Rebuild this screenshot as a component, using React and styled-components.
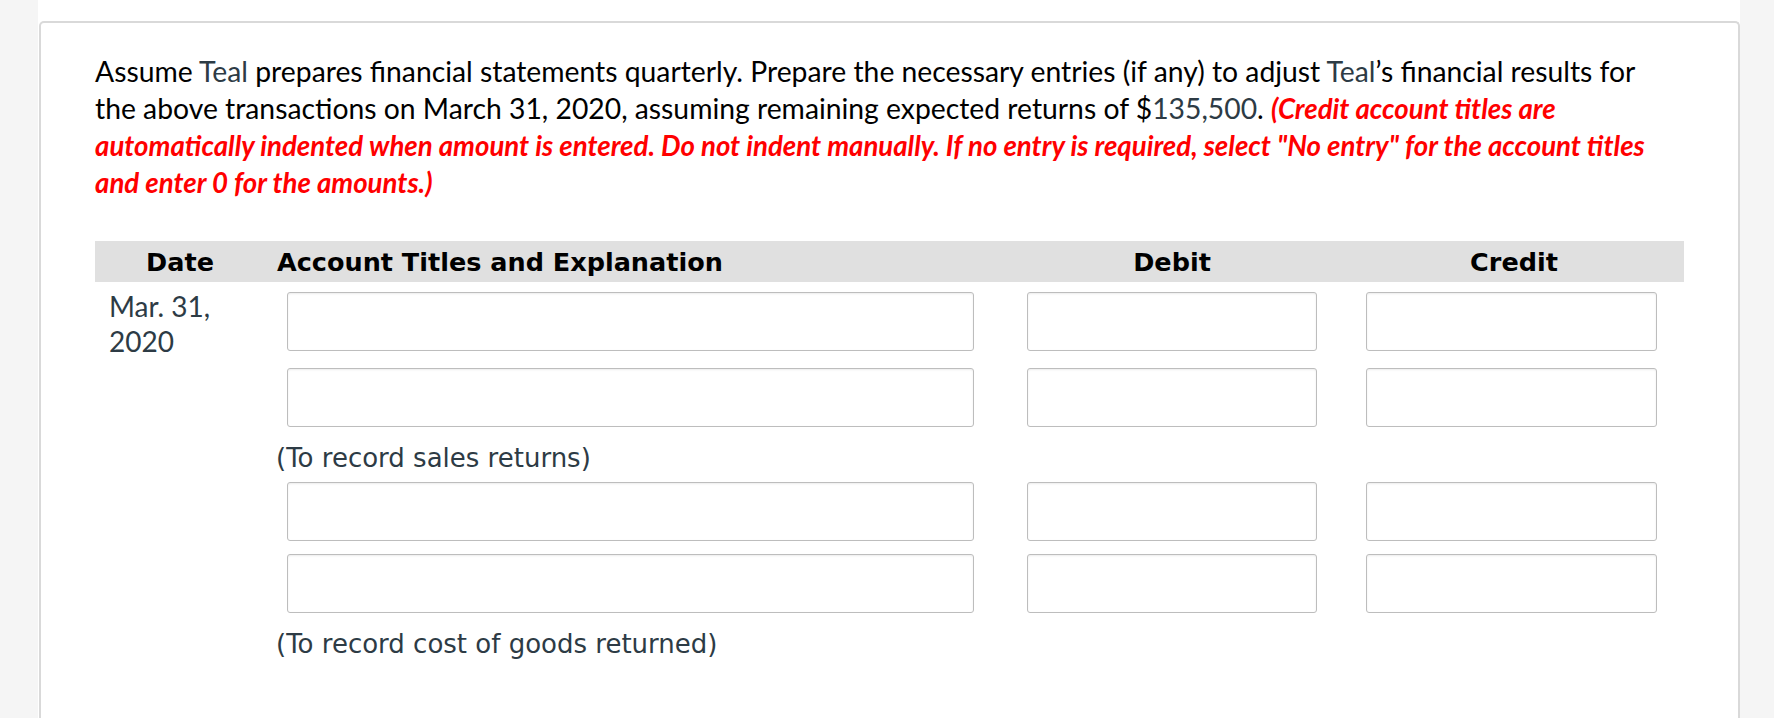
import React from 'react'
import styled, { createGlobalStyle } from 'styled-components'

const GlobalStyle = createGlobalStyle`
  html, body {
    margin: 0;
    padding: 0;
    background: #f5f5f5;
  }
  * {
    box-sizing: border-box;
  }
`;

const Page = styled.div`
  margin-left: 38px;
  width: 1702px;
  min-height: 100vh;
  padding-top: 21px;
  background: #fff;
`;

const Card = styled.div`
  margin-left: 1px;
  border: 2px solid #d9d9d9;
  border-bottom: none;
  border-radius: 5px 5px 0 0;
  padding: 30px 54px 60px 54px;
  min-height: 720px;
`;

const Question = styled.p`
  margin: 0;
  font-family: Lato, "Liberation Sans", sans-serif;
  font-size: 28.3px;
  line-height: 37px;
  color: #000;
`;

const Accent = styled.span`
  color: #2d3b45;
`;

const Warning = styled.span`
  color: #ff0000;
  font-size: 27.6px;
  font-weight: 700;
  font-style: italic;
`;

const COLUMNS = '170px 735px 344px 1fr';

const Journal = styled.div`
  margin-top: 40px;
  display: flex;
  flex-direction: column;
`;

const HeadRow = styled.div`
  display: grid;
  grid-template-columns: ${COLUMNS};
  align-items: center;
  height: 41px;
  background: #e0e0e0;
`;

const HeadCell = styled.div`
  font-family: "DejaVu Sans", Verdana, sans-serif;
  font-weight: 700;
  font-size: 25.5px;
  color: #000;
  text-align: ${(props) => (props.$left ? 'left' : 'center')};
  padding-left: ${(props) => (props.$left ? '12px' : '0')};
`;

const EntryRow = styled.div`
  display: grid;
  grid-template-columns: ${COLUMNS};
  margin-top: ${(props) => props.$top}px;
`;

const DateCell = styled.div`
  height: 59px;
  margin-top: -3px;
  padding-left: 14px;
  font-family: Lato, "Liberation Sans", sans-serif;
  font-size: 28px;
  line-height: 35px;
  color: #2d3b45;
  overflow: visible;
`;

const Field = styled.input`
  display: block;
  height: 59px;
  width: ${(props) => props.$width}px;
  margin-left: ${(props) => props.$left}px;
  border: 1px solid #bdbdbd;
  border-radius: 3px;
  box-shadow: inset 0 1px 2px rgba(0, 0, 0, 0.08);
  background: #fff;
  font-family: "DejaVu Sans", Verdana, sans-serif;
  font-size: 22px;
  padding: 0 10px;
  outline: none;
`;

const Note = styled.div`
  grid-column: 2 / span 3;
  padding-left: 11px;
  font-family: "DejaVu Sans", Verdana, sans-serif;
  font-size: 26px;
  line-height: 30px;
  color: #2d3b45;
`;

const LineItem = ({ top, date }) => (
  <EntryRow $top={top}>
    <DateCell>{date}</DateCell>
    <Field $width={687} $left={22} />
    <Field $width={290} $left={27} />
    <Field $width={291} $left={22} />
  </EntryRow>
);

const entries = [
  {
    date: (
      <>
        Mar. 31,
        <br />
        2020
      </>
    ),
    gaps: [10, 17],
    noteTop: 16,
    note: '(To record sales returns)',
  },
  {
    date: null,
    gaps: [9, 13],
    noteTop: 16,
    note: '(To record cost of goods returned)',
  },
];

const App = () => {
  return (
    <>
      <GlobalStyle />
      <Page>
        <Card>
          <Question>
            Assume <Accent>Teal</Accent> prepares financial statements quarterly. Prepare the necessary
            entries (if any) to adjust <Accent>Teal</Accent>’s financial results for
            <br />
            the above transactions on March 31, 2020, assuming remaining expected returns of
            $<Accent>135,500</Accent>.{' '}
            <Warning>
              (Credit account titles are
              <br />
              automatically indented when amount is entered. Do not indent manually. If no entry is
              required, select "No entry" for the account titles
              <br />
              and enter 0 for the amounts.)
            </Warning>
          </Question>

          <Journal>
            <HeadRow>
              <HeadCell>Date</HeadCell>
              <HeadCell $left>Account Titles and Explanation</HeadCell>
              <HeadCell>Debit</HeadCell>
              <HeadCell>Credit</HeadCell>
            </HeadRow>
            {entries.map((entry, i) => (
              <React.Fragment key={i}>
                <LineItem top={entry.gaps[0]} date={entry.date} />
                <LineItem top={entry.gaps[1]} />
                <EntryRow $top={entry.noteTop}>
                  <Note>{entry.note}</Note>
                </EntryRow>
              </React.Fragment>
            ))}
          </Journal>
        </Card>
      </Page>
    </>
  )
};

export default App;
